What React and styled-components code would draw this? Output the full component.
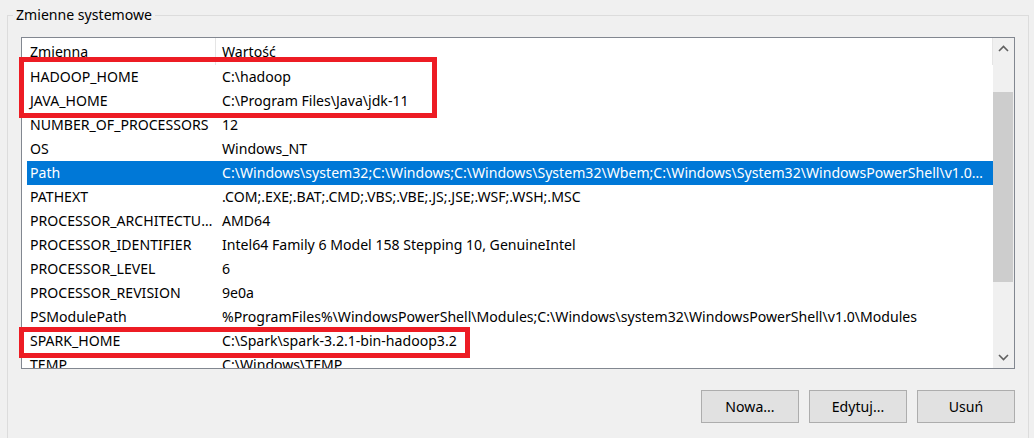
import React from "react";
import styled, { createGlobalStyle } from "styled-components";

const Global = createGlobalStyle`
  html, body { margin: 0; padding: 0; background: #f0f0f0; }
  body { font-family: "Segoe UI", "Noto Sans", "Open Sans", sans-serif; }
`;

const Page = styled.div`
  position: relative;
  width: 1034px;
  height: 438px;
  overflow: hidden;
  background: #f0f0f0;
  font-family: "Noto Sans", sans-serif;
  font-size: 14.1px;
  color: #000;
`;

const Group = styled.fieldset`
  box-sizing: border-box;
  margin: 5px 5px 0 7px;
  padding: 0 13px 0 13px;
  height: 480px;
  border: 1px solid #dcdcdc;
  min-width: 0;
`;

const Legend = styled.legend`
  margin-left: -8px;
  padding: 0 3px;
  line-height: 20px;
  font-size: 14.1px;
  color: #000;
`;

const ListBox = styled.div`
  box-sizing: border-box;
  margin-top: 12px;
  width: 994px;
  height: 332px;
  border: 1px solid #828790;
  background: #fff;
  display: flex;
  overflow: hidden;
`;

const ListArea = styled.div`
  flex: 1;
  min-width: 0;
  overflow: hidden;
`;

const Header = styled.div`
  display: grid;
  grid-template-columns: 194px 1fr;
  height: 27px;
  align-items: stretch;
`;

const HeadCell = styled.div`
  display: flex;
  align-items: center;
  padding-left: ${(p) => p.$pad}px;
  border-right: 1px solid #e5e5e5;
  line-height: 18px;
  padding-top: 1px;
`;

const Row = styled.div`
  display: grid;
  grid-template-columns: 189px 1fr;
  height: 24px;
  margin-left: 5px;
  align-items: center;
  background: ${(p) => (p.$selected ? "#0078d7" : "transparent")};
  color: ${(p) => (p.$selected ? "#fff" : "#000")};
`;

const Cell = styled.div`
  padding-left: ${(p) => p.$pad}px;
  padding-right: ${(p) => p.$padRight}px;
  white-space: nowrap;
  overflow: hidden;
  text-overflow: ellipsis;
  line-height: 24px;
`;

const ScrollBar = styled.div`
  width: 21px;
  flex: none;
  background: #f0f0f0;
  display: flex;
  flex-direction: column;
`;

const ArrowBtn = styled.div`
  height: 21px;
  flex: none;
  display: flex;
  align-items: center;
  justify-content: center;
`;

const Track = styled.div`
  flex: 1;
  padding-top: ${(p) => p.$offset}px;
`;

const Thumb = styled.div`
  margin: 0 1px 0 0;
  height: ${(p) => p.$size}px;
  background: #cdcdcd;
`;

const Buttons = styled.div`
  display: flex;
  justify-content: flex-end;
  gap: 10px;
  margin-top: 21px;
  width: 994px;
`;

const Button = styled.button`
  box-sizing: border-box;
  width: 98px;
  height: 33px;
  background: #e1e1e1;
  border: 1px solid #adadad;
  border-radius: 0;
  font-family: "Noto Sans", sans-serif;
  font-size: 14.1px;
  color: #000;
  padding: 0;
`;

const Mark = styled.div`
  position: absolute;
  box-sizing: border-box;
  border: 5px solid #ed1c24;
  pointer-events: none;
`;

const Chevron = ({ up }) => (
  <svg width="11" height="7" viewBox="0 0 11 7">
    <path
      d={up ? "M1 6 L5.5 1.5 L10 6" : "M1 1 L5.5 5.5 L10 1"}
      fill="none"
      stroke="#606060"
      strokeWidth="1.6"
    />
  </svg>
);

const rows = [
  ["HADOOP_HOME", "C:\\hadoop"],
  ["JAVA_HOME", "C:\\Program Files\\Java\\jdk-11"],
  ["NUMBER_OF_PROCESSORS", "12"],
  ["OS", "Windows_NT"],
  [
    "Path",
    "C:\\Windows\\system32;C:\\Windows;C:\\Windows\\System32\\Wbem;C:\\Windows\\System32\\WindowsPowerShell\\v1.0\\;C:\\Windows\\System32\\OpenSSH\\",
    true,
  ],
  ["PATHEXT", ".COM;.EXE;.BAT;.CMD;.VBS;.VBE;.JS;.JSE;.WSF;.WSH;.MSC"],
  ["PROCESSOR_ARCHITECTURE", "AMD64"],
  ["PROCESSOR_IDENTIFIER", "Intel64 Family 6 Model 158 Stepping 10, GenuineIntel"],
  ["PROCESSOR_LEVEL", "6"],
  ["PROCESSOR_REVISION", "9e0a"],
  [
    "PSModulePath",
    "%ProgramFiles%\\WindowsPowerShell\\Modules;C:\\Windows\\system32\\WindowsPowerShell\\v1.0\\Modules",
  ],
  ["SPARK_HOME", "C:\\Spark\\spark-3.2.1-bin-hadoop3.2"],
  ["TEMP", "C:\\Windows\\TEMP"],
];

export default function App() {
  return (
    <Page>
      <Global />
      <Group>
        <Legend>Zmienne systemowe</Legend>
        <ListBox>
          <ListArea>
            <Header>
              <HeadCell $pad={8}>Zmienna</HeadCell>
              <HeadCell $pad={6}>Wartość</HeadCell>
            </Header>
            {rows.map(([k, v, sel]) => (
              <Row key={k} $selected={sel}>
                <Cell $pad={3} $padRight={1}>{k}</Cell>
                <Cell $pad={6} $padRight={7}>{v}</Cell>
              </Row>
            ))}
          </ListArea>
          <ScrollBar>
            <ArrowBtn>
              <Chevron up />
            </ArrowBtn>
            <Track $offset={33}>
              <Thumb $size={190} />
            </Track>
            <ArrowBtn>
              <Chevron />
            </ArrowBtn>
          </ScrollBar>
        </ListBox>
        <Buttons>
          <Button>Nowa...</Button>
          <Button>Edytuj...</Button>
          <Button>Usuń</Button>
        </Buttons>
      </Group>
      <Mark style={{ left: 19, top: 57, width: 418, height: 61 }} />
      <Mark style={{ left: 19, top: 327, width: 451, height: 31 }} />
    </Page>
  );
}
